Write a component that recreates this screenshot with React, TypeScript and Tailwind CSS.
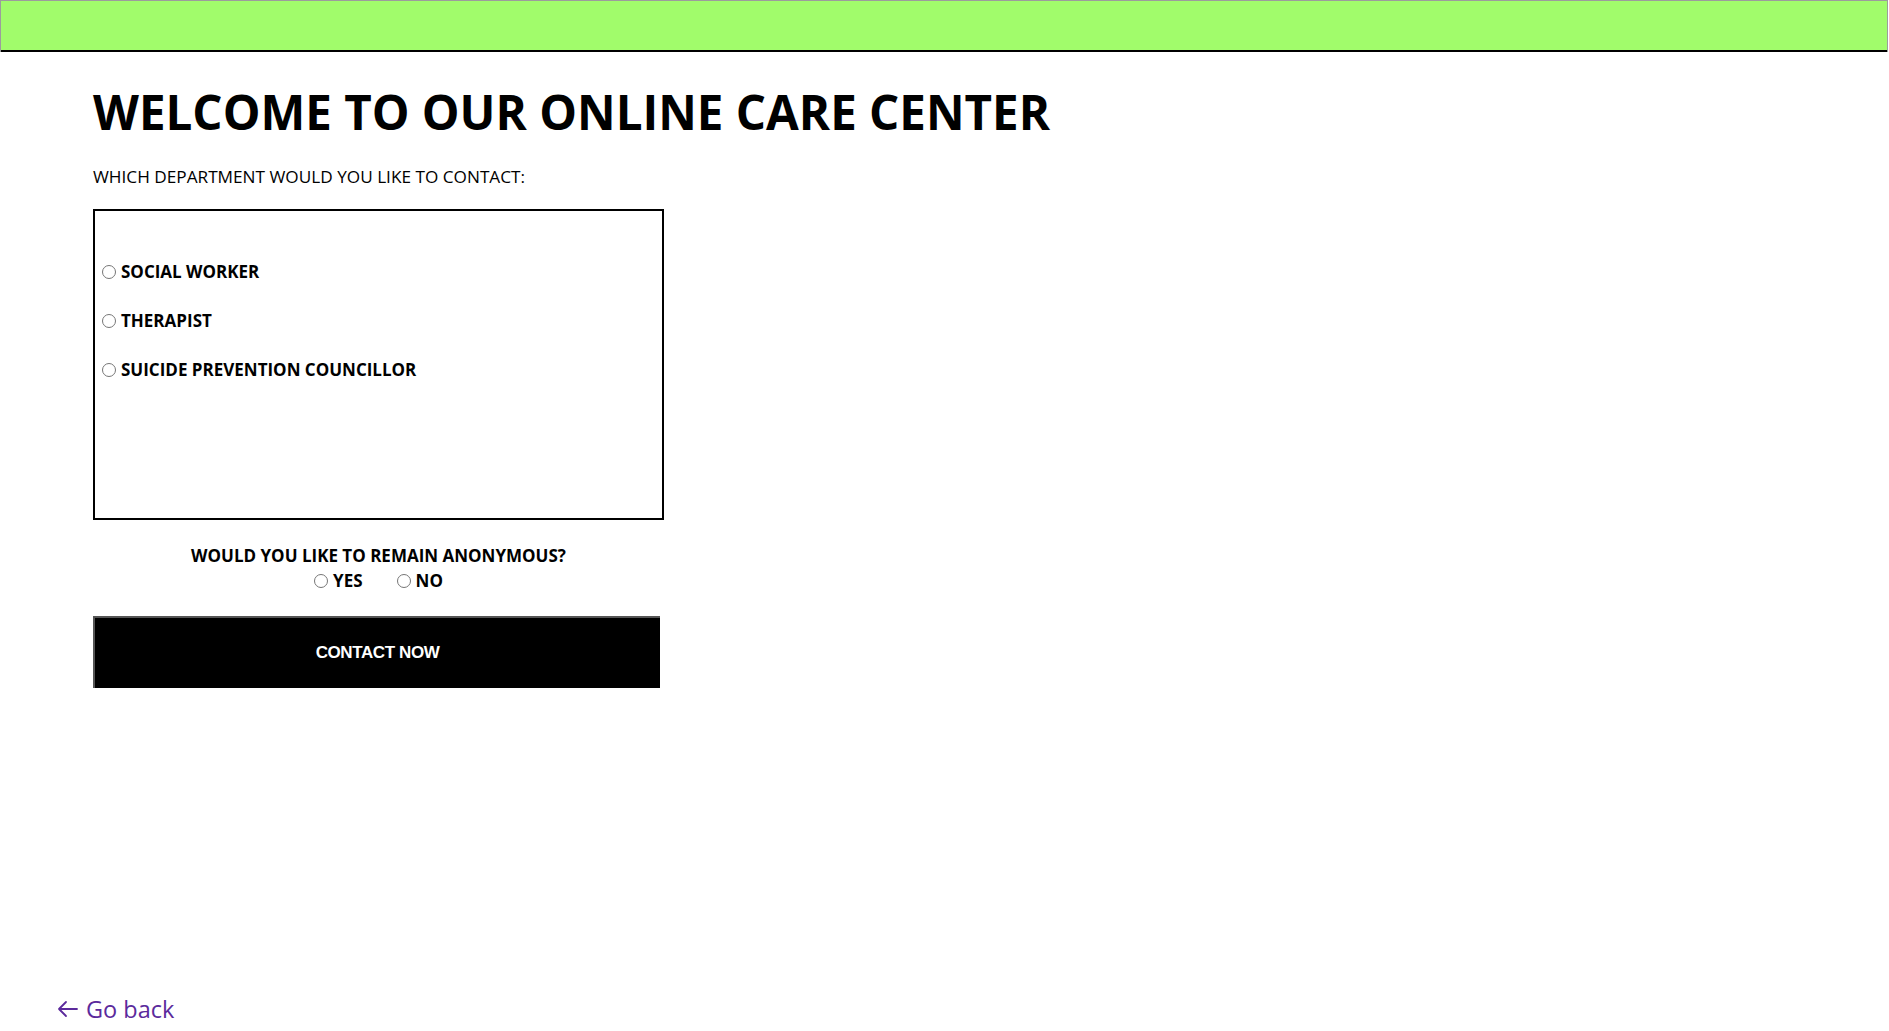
import React from "react";

const f = { fontFamily: "'Open Sans', sans-serif" };

export default function App() {
  const depts = ["SOCIAL WORKER", "THERAPIST", "SUICIDE PREVENTION COUNCILLOR"];
  return (
    <div className="relative h-[1031px] w-full bg-white overflow-hidden flex flex-col" style={f}>
      <div className="h-[52px] w-[1888px] shrink-0 border border-[#9c9c9c] border-b-0 bg-[#a1fc6b]">
        <div className="h-[49px]" />
        <div className="h-[2px] bg-black" />
      </div>
      <div className="pl-[93px] pt-[28px]">
        <h1 className="text-[47.5px] font-bold leading-[64px] text-black">WELCOME TO OUR ONLINE CARE CENTER</h1>
        <p className="mt-[21px] text-[17.2px] leading-[24px] text-black">WHICH DEPARTMENT WOULD YOU LIKE TO CONTACT:</p>
        <div className="mt-[20px] h-[311px] w-[571px] border-2 border-black pt-[48px] pl-[3px] flex flex-col gap-[24px]">
          {depts.map((d) => (
            <label key={d} className="flex items-center text-[17px] font-bold leading-[25px] text-black">
              <input type="radio" name="dept" className="m-0 mr-[5px] ml-[4px] h-[14px] w-[14px]" />
              {d}
            </label>
          ))}
        </div>
        <div className="w-[571px] mt-[23px] flex flex-col items-center">
          <div className="text-[17px] font-bold leading-[25px] text-black">WOULD YOU LIKE TO REMAIN ANONYMOUS?</div>
          <div className="flex items-center gap-[34px] text-[17px] font-bold leading-[25px] text-black">
            <label className="flex items-center">
              <input type="radio" name="anon" className="m-0 mr-[5px] h-[14px] w-[14px]" />
              YES
            </label>
            <label className="flex items-center">
              <input type="radio" name="anon" className="m-0 mr-[5px] h-[14px] w-[14px]" />
              NO
            </label>
          </div>
        </div>
        <button
          className="mt-[23px] h-[72px] w-[567px] bg-black text-white border-t-2 border-l-2 border-[#555555] text-[17px] font-bold tracking-[-0.4px]"
          style={{ fontFamily: "'Liberation Sans', Arial, sans-serif" }}
        >
          CONTACT NOW
        </button>
      </div>
      <a
        href="#"
        className="mt-auto mb-[7px] ml-[57px] flex items-center gap-[8px] text-[23.5px] leading-[30px] text-[#5b2a9c] no-underline"
        style={{ fontFamily: "'Open Sans', sans-serif" }}
      >
        <svg width="21" height="18" viewBox="0 0 21 18" fill="none" stroke="currentColor" strokeWidth="1.8" strokeLinecap="round" strokeLinejoin="round">
          <path d="M20 9H2M9 2L2 9l7 7" />
        </svg>
        Go back
      </a>
    </div>
  );
}
